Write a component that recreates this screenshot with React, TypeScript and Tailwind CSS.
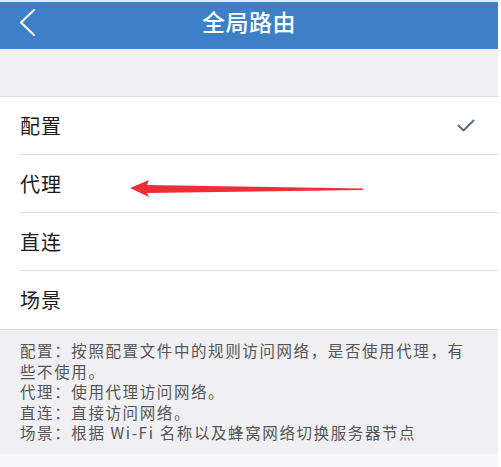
const rows = ["配置", "代理", "直连", "场景"];

const notes = [
  "配置：按照配置文件中的规则访问网络，是否使用代理，有些不使用。",
  "代理：使用代理访问网络。",
  "直连：直接访问网络。",
  "场景：根据 Wi-Fi 名称以及蜂窝网络切换服务器节点",
];

const App = () => {
  return (
    <div className="relative w-[501px] h-[467px] overflow-hidden bg-white font-['Noto_Sans_CJK_SC','Noto_Sans',sans-serif]">
      <div className="w-[498px] h-full flex flex-col bg-[#efeff4]">
        {/* nav bar */}
        <div className="h-[49px] shrink-0 border-t-2 border-[#e6edf5] bg-[#3d80c7] relative flex justify-center">
          <svg
            className="absolute left-[17px] top-[5px]"
            width="22"
            height="30"
            viewBox="0 0 22 30"
            fill="none"
          >
            <path
              d="M17 3 L4 15.5 L17 28"
              stroke="white"
              strokeWidth="2"
              strokeLinecap="round"
              strokeLinejoin="round"
            />
          </svg>
          <h1 className="pt-[3px] text-[23px] leading-[32px] font-medium text-white tracking-[0.5px]">
            全局路由
          </h1>
        </div>

        <div className="h-[47px] shrink-0" />

        {/* options */}
        <div className="bg-white border-t border-b border-[#dcdcdc] shrink-0">
          {rows.map((label, i) => (
            <div key={label} className="h-[58px] pl-5 flex">
              <div
                className={`flex-1 flex items-center justify-between pr-[23px] ${
                  i < rows.length - 1 ? "border-b border-[#dedede]" : ""
                }`}
              >
                <span className="text-[20px] text-[#1c1c1c] tracking-[1px]">
                  {label}
                </span>
                {i === 0 && (
                  <svg width="18" height="14" viewBox="0 0 18 14" fill="none">
                    <path
                      d="M1.5 6.5 L6.5 11.5 L16.5 1.5"
                      stroke="#4f7193"
                      strokeWidth="2"
                      strokeLinecap="round"
                      strokeLinejoin="round"
                    />
                  </svg>
                )}
              </div>
            </div>
          ))}
        </div>

        {/* description */}
        <div className="h-[124px] shrink-0 px-5 pt-[10px] text-[15.5px] leading-[20.5px] tracking-[1.6px] text-[#555]">
          {notes.map((n) => (
            <p key={n}>{n}</p>
          ))}
        </div>
        <div className="flex-1 bg-[#f7f7f9]" />
      </div>

      {/* red annotation arrow */}
      <svg
        className="absolute left-0 top-0 pointer-events-none"
        width="501"
        height="467"
        viewBox="0 0 501 467"
      >
        <polygon
          points="130,188 149,180 147,185 363,188.5 363,190 147,193 149,197"
          fill="#ec2f36"
        />
      </svg>
    </div>
  );
};

export default App;
